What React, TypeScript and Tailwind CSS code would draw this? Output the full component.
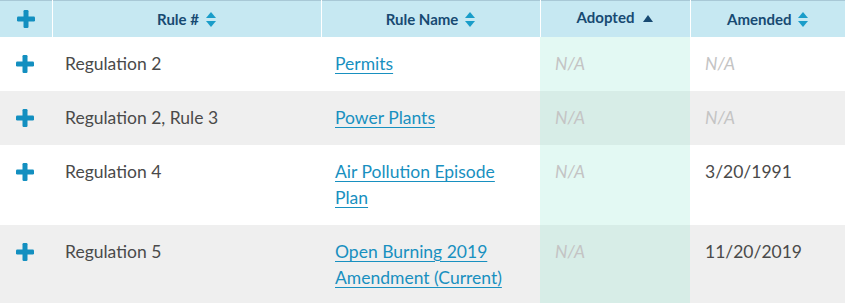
import React from 'react';

const rows = [
  { rule: 'Regulation 2', name: 'Permits', adopted: null, amended: null },
  { rule: 'Regulation 2, Rule 3', name: 'Power Plants', adopted: null, amended: null },
  { rule: 'Regulation 4', name: 'Air Pollution Episode Plan', adopted: null, amended: '3/20/1991' },
  { rule: 'Regulation 5', name: 'Open Burning 2019 Amendment (Current)', adopted: null, amended: '11/20/2019' },
];

function Plus() {
  return (
    <svg width="18" height="18" viewBox="0 0 18 18" className="block">
      <rect x="6.5" y="0" width="5" height="18" rx="1.2" fill="#138fc0" />
      <rect x="0" y="6.5" width="18" height="5" rx="1.2" fill="#138fc0" />
    </svg>
  );
}

function SortBoth() {
  return (
    <svg width="10" height="15" viewBox="0 0 10 15" className="inline-block ml-[7px] align-[-2px]">
      <path d="M5 0 L10 6 L0 6 Z" fill="#1a9dc9" />
      <path d="M0 9 L10 9 L5 15 Z" fill="#1a9dc9" />
    </svg>
  );
}

function SortUp() {
  return (
    <svg width="10" height="7" viewBox="0 0 10 7" className="inline-block ml-[9px] align-[1px]">
      <path d="M5 0 L10 7 L0 7 Z" fill="#174a72" />
    </svg>
  );
}

export default function App() {
  return (
    <div className="w-[845px] h-[303px] overflow-hidden bg-white font-['Lato','Liberation_Sans',sans-serif]">
      <table className="w-[845px] table-fixed border-collapse">
        <colgroup>
          <col className="w-[52px]" />
          <col className="w-[269px]" />
          <col className="w-[219px]" />
          <col className="w-[150px]" />
          <col className="w-[155px]" />
        </colgroup>
        <thead>
          <tr className="h-[36px] bg-[#c6e8f2] border-t border-[#a8c8d6] text-[15px] font-bold text-[#174a72]">
            <th className="p-0 border-r border-white">
              <div className="flex justify-center pt-[1px]">
                <Plus />
              </div>
            </th>
            <th className="p-0 border-r border-white text-center">
              Rule #<SortBoth />
            </th>
            <th className="p-0 border-r border-white text-center">
              Rule Name<SortBoth />
            </th>
            <th className="p-0 border-r border-white text-center pb-[3px]">
              Adopted<SortUp />
            </th>
            <th className="p-0 text-center">
              Amended<SortBoth />
            </th>
          </tr>
        </thead>
        <tbody className="text-[17.5px] leading-[26px] text-[#4a4a4a]">
          {rows.map((r, i) => {
            const gray = i % 2 === 1;
            return (
              <tr key={r.rule} className={gray ? 'bg-[#efefef]' : 'bg-white'}>
                <td className="align-top pt-[18px] pl-[16px]">
                  <Plus />
                </td>
                <td className="align-top py-[14px] pl-[13px] pr-[14px]">{r.rule}</td>
                <td className="align-top py-[14px] pl-[14px] pr-[14px]">
                  <a
                    href="#"
                    className="text-[#1890c0] underline decoration-[#1890c0] underline-offset-[3px] decoration-1"
                  >
                    {r.name}
                  </a>
                </td>
                <td className={`align-top py-[14px] pl-[15px] ${gray ? 'bg-[#d7ede7]' : 'bg-[#e3f9f3]'}`}>
                  <span className="italic text-[#c4c4c4]">N/A</span>
                </td>
                <td className="align-top py-[14px] pl-[15px]">
                  {r.amended ? r.amended : <span className="italic text-[#c4c4c4]">N/A</span>}
                </td>
              </tr>
            );
          })}
        </tbody>
      </table>
    </div>
  );
}
